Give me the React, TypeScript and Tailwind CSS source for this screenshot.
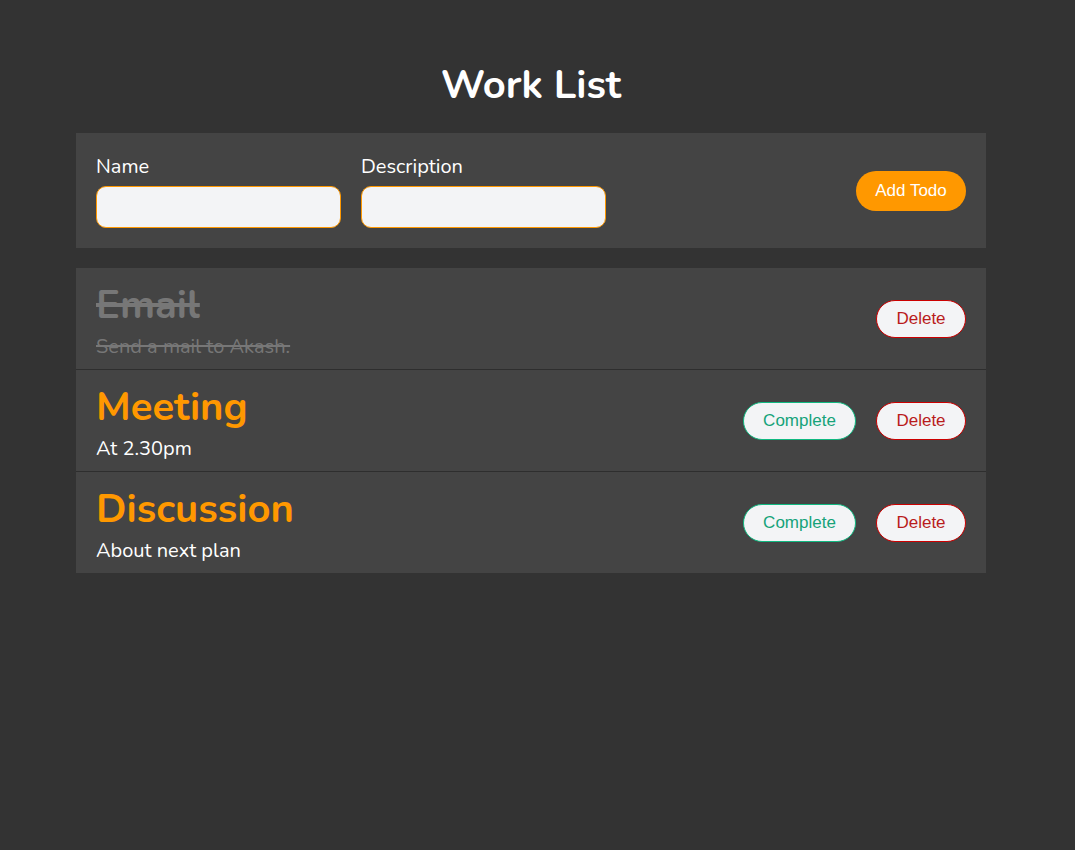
import React from "react";

const items = [
  { title: "Email", desc: "Send a mail to Akash.", done: true },
  { title: "Meeting", desc: "At 2.30pm", done: false },
  { title: "Discussion", desc: "About next plan", done: false },
];

export default function App() {
  return (
    <div className="min-h-[850px] bg-[#333333] font-['Nunito','Noto_Sans',sans-serif] text-white">
      <div className="w-[910px] ml-[76px] pt-[58px]">
        <h1 className="text-center text-[40px] font-bold leading-[55px] mb-[20px]">Work List</h1>
        <div className="bg-[#444444] h-[115px] px-[20px] flex items-center">
          <div className="flex gap-[20px]">
            <div className="flex flex-col">
              <label className="text-[20px] leading-[27px] mb-[6px]">Name</label>
              <input className="w-[245px] h-[42px] rounded-[10px] border border-[#ff9800] bg-[#f3f4f6] outline-none" />
            </div>
            <div className="flex flex-col">
              <label className="text-[20px] leading-[27px] mb-[6px]">Description</label>
              <input className="w-[245px] h-[42px] rounded-[10px] border border-[#ff9800] bg-[#f3f4f6] outline-none" />
            </div>
          </div>
          <div className="ml-auto">
            <button className="w-[110px] h-[40px] rounded-full bg-[#ff9800] text-white text-[17px] font-['Liberation_Sans',Arial,sans-serif]">Add Todo</button>
          </div>
        </div>
        <div className="mt-[20px] bg-[#444444]">
          {items.map((it, i) => (
            <div
              key={it.title}
              className={`px-[20px] flex items-center ${i > 0 ? "h-[102px] border-t border-[#2e2e2e]" : "h-[101px]"}`}
            >
              <div className="flex flex-col">
                <div
                  className={`text-[40px] font-bold leading-[55px] ${it.done ? "text-[#777777] line-through" : "text-[#ff9800]"}`}
                >
                  {it.title}
                </div>
                <div className={`text-[20px] leading-[27px] ${it.done ? "text-[#777777] line-through" : "text-white"}`}>
                  {it.desc}
                </div>
              </div>
              <div className="ml-auto flex gap-[20px] font-['Liberation_Sans',Arial,sans-serif] text-[17px]">
                {!it.done && (
                  <button className="w-[113px] h-[38px] rounded-full border border-[#10b981] bg-[#f3f4f6] text-[#16a37a]">Complete</button>
                )}
                <button className="w-[90px] h-[38px] rounded-full border border-[#cc0000] bg-[#f3f4f6] text-[#b91c1c]">Delete</button>
              </div>
            </div>
          ))}
        </div>
      </div>
    </div>
  );
}
